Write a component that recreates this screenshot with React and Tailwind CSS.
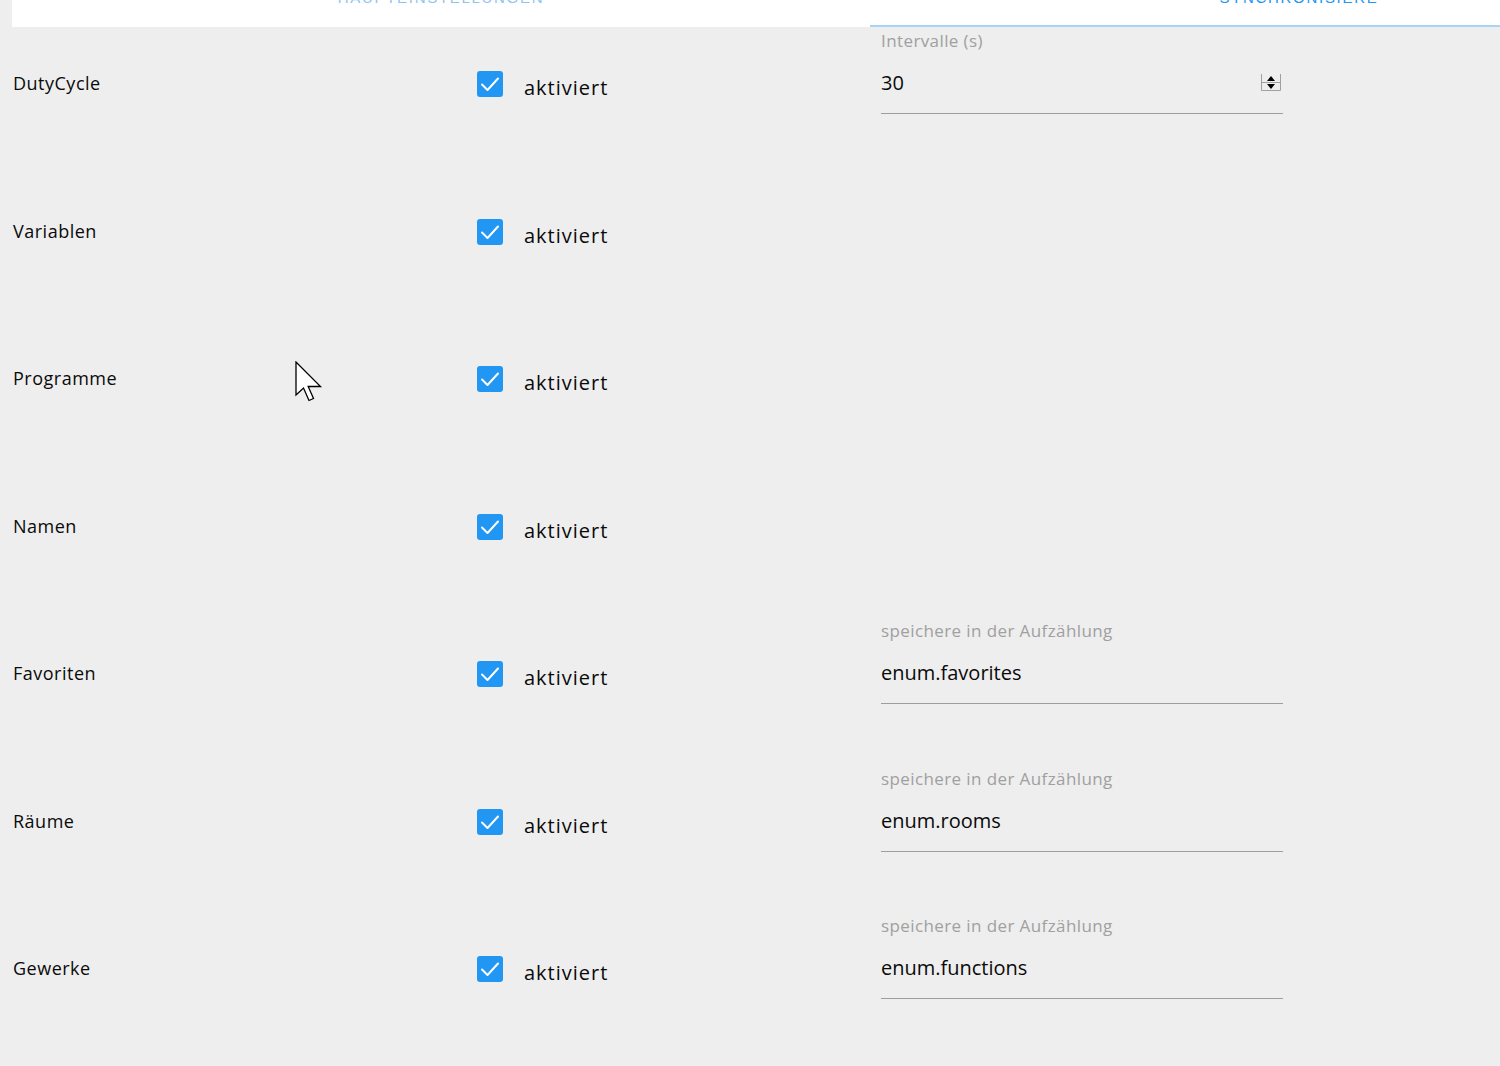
import React from 'react';

const rows = [
    { label: 'DutyCycle', field: { label: 'Intervalle (s)', value: '30', number: true } },
    { label: 'Variablen' },
    { label: 'Programme' },
    { label: 'Namen' },
    { label: 'Favoriten', field: { label: 'speichere in der Aufzählung', value: 'enum.favorites' } },
    { label: 'Räume', field: { label: 'speichere in der Aufzählung', value: 'enum.rooms' } },
    { label: 'Gewerke', field: { label: 'speichere in der Aufzählung', value: 'enum.functions' } },
];

const Spinner = () => (
    <svg width="20" height="17" viewBox="0 0 20 17" className="shrink-0">
        <path d="M0.5 0 V16.5 H19.5 V0" fill="none" stroke="#a0a0a0" strokeWidth="1" />
        <line x1="0" y1="8.5" x2="20" y2="8.5" stroke="#a0a0a0" strokeWidth="1" />
        <polygon points="10,2 14,7 6,7" fill="#000" />
        <polygon points="6,10 14,10 10,15" fill="#000" />
    </svg>
);

const Checkbox = () => (
    <div className="w-[26px] h-[26px] rounded-[3px] bg-[#2196f3] shrink-0 flex items-center justify-center">
        <svg width="26" height="26" viewBox="0 0 26 26">
            <path d="M5 13.5 L10.5 19 L21 7.5" fill="none" stroke="#fff" strokeWidth="2" strokeLinecap="round" strokeLinejoin="round" />
        </svg>
    </div>
);

const Field = ({ field }) => (
    <div className="w-[402px] pt-[4px]">
        <div className="text-[17px] leading-[20px] tracking-[0.4px] text-[#a0a0a0] whitespace-nowrap">{field.label}</div>
        <div className="mt-[18px] pb-[16px] border-b border-[#9e9e9e] flex items-center justify-between">
            <span className="text-[20px] leading-[28px] text-[#0a0a0a]">{field.value}</span>
            {field.number && <span className="mr-[2px] mt-[-1px]"><Spinner /></span>}
        </div>
    </div>
);

const App = () => {
    return (
        <div className="relative w-[1500px] h-[1066px] overflow-hidden bg-[#eeeeee]" style={{ fontFamily: '"Open Sans", "Noto Sans", sans-serif' }}>
            {/* Tabs */}
            <div className="ml-[12px] h-[27px] bg-white flex overflow-hidden" style={{ fontFamily: '"Liberation Sans", Arial, sans-serif' }}>
                <div className="relative w-[858px] shrink-0 flex justify-center">
                    <span className="mt-[-11px] text-[15px] leading-[18px] tracking-[1.7px] uppercase text-[#90c4f0] whitespace-nowrap">Haupteinstellungen</span>
                </div>
                <div className="relative w-[858px] shrink-0 flex justify-center">
                    <span className="mt-[-11px] text-[15px] leading-[18px] tracking-[1.7px] uppercase text-[#2196f3] whitespace-nowrap">Synchronisiere</span>
                    <div className="absolute left-0 right-0 bottom-0 h-[2px] bg-[#a8d4f5]"></div>
                </div>
            </div>

            {/* Rows */}
            {rows.map((row) => (
                <div key={row.label} className="grid grid-cols-[465px_405px_1fr] h-[147.5px]">
                    <div className="pl-[13px] pt-[44px] text-[18px] leading-[24px] tracking-[0.5px] text-[#0a0a0a]">{row.label}</div>
                    <div className="pl-[12px] flex items-start">
                        <div className="mt-[44px]"><Checkbox /></div>
                        <span className="ml-[21px] mt-[47px] text-[20px] leading-[28px] tracking-[1px] text-[#0a0a0a]">aktiviert</span>
                    </div>
                    <div className="pl-[11px]">
                        {row.field && <Field field={row.field} />}
                    </div>
                </div>
            ))}

            {/* Mauszeiger */}
            <svg className="absolute left-[295px] top-[361px]" width="28" height="42" viewBox="0 0 28 42">
                <path d="M1 1 L1 34 L8.5 27 L14 39.5 L18.5 37.5 L13.2 25.5 L25.5 25.5 Z" fill="#fff" stroke="#000" strokeWidth="1.3" strokeLinejoin="miter" />
            </svg>
        </div>
    );
};

export default App;
